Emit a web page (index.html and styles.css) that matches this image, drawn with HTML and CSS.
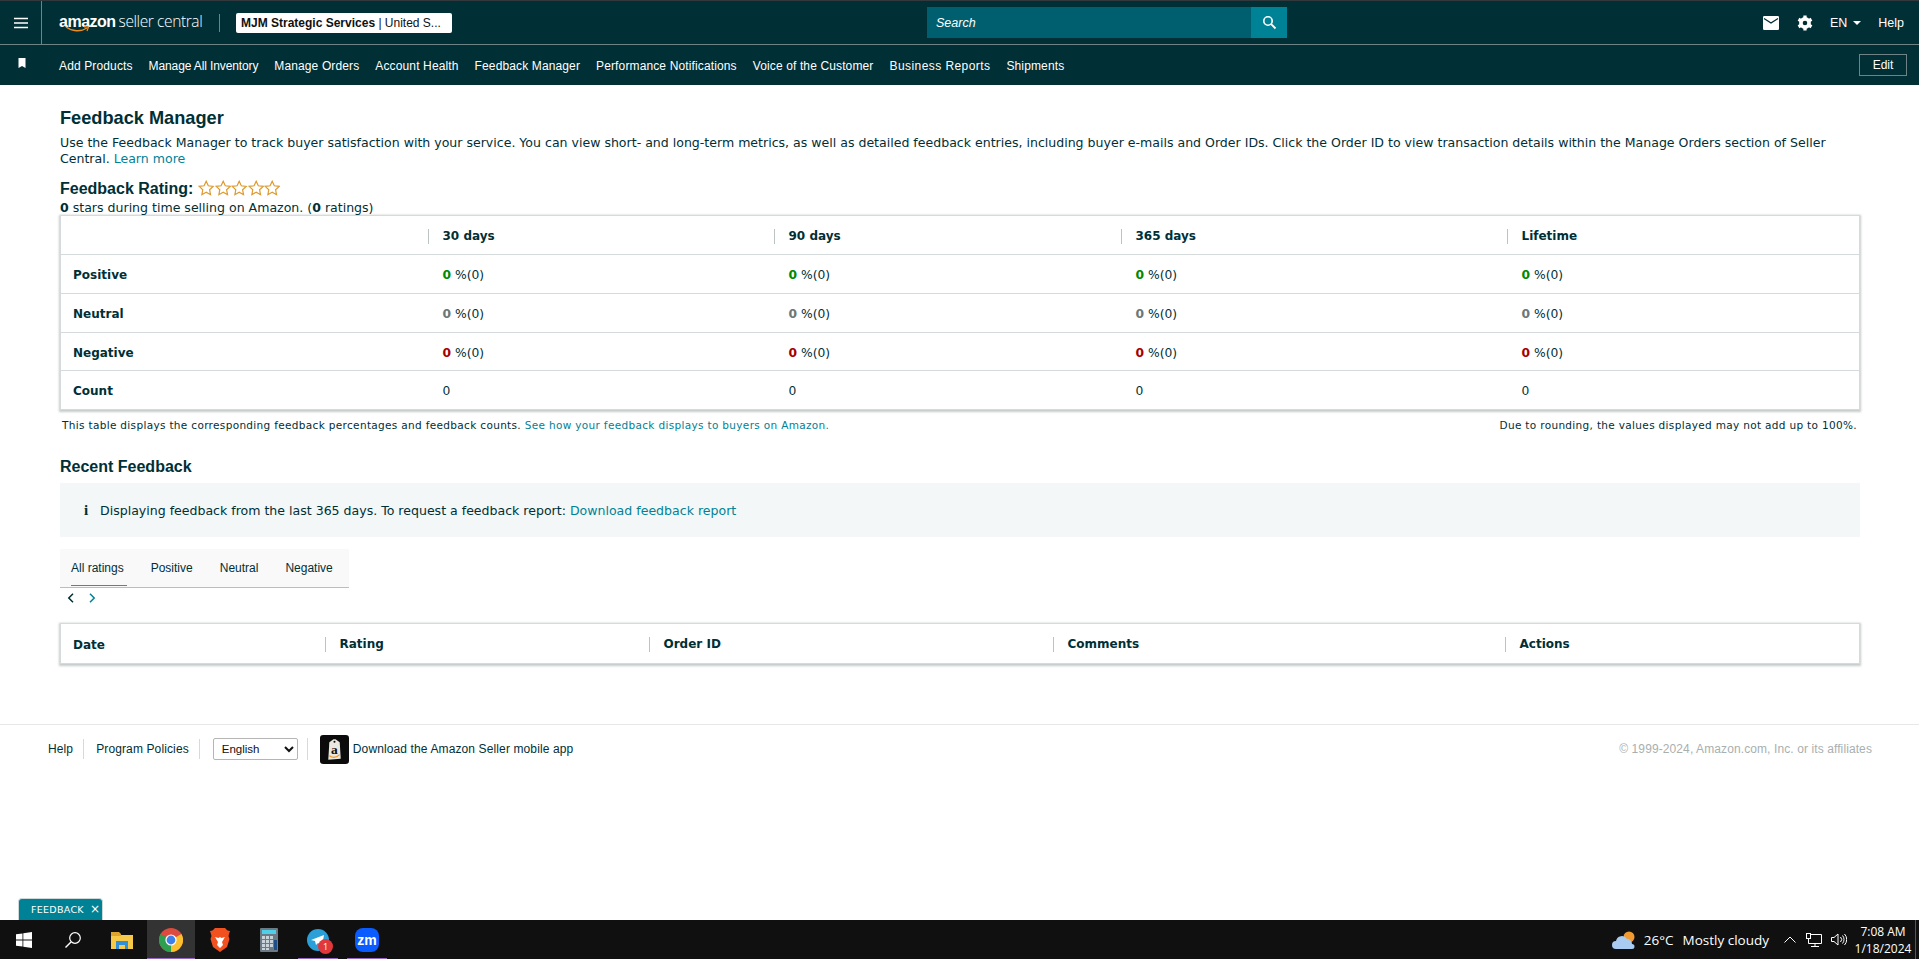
FILE: index.html
```html
<!DOCTYPE html>
<html lang="en">
<head>
<meta charset="utf-8">
<title>Feedback Manager</title>
<link rel="stylesheet" href="styles.css">
</head>
<body>
<header class="header">
  <div class="topbar">
    <div class="burger"><svg width="14" height="12" viewBox="0 0 14 12"><path d="M0 1.500h14M0 6h14M0 10.500h14" stroke="#fff" stroke-width="1.700"/></svg></div>
    <div class="logo">
      <span class="logo-a">amazon</span><span class="logo-b">seller central</span>
      <svg class="smile" width="26" height="7" viewBox="0 0 26 7"><path d="M1 1c6 4.500 15 5 21 1" fill="none" stroke="#f08c1e" stroke-width="1.400"/><path d="M19 .8l4.500 .2-1.500 4" fill="none" stroke="#f08c1e" stroke-width="1.200"/></svg>
    </div>
    <div class="logo-sep"></div>
    <div class="account"><b>MJM Strategic Services</b> | United S...</div>
    <div class="search">
      <div class="search-input">Search</div>
      <div class="search-btn"><svg width="15" height="15" viewBox="0 0 15 15"><circle cx="6" cy="6" r="4.200" fill="none" stroke="#fff" stroke-width="1.600"/><path d="M9.200 9.200l4.300 4.300" stroke="#fff" stroke-width="1.800"/></svg></div>
    </div>
    <div class="top-right">
      <svg width="16" height="14" viewBox="0 0 16 14"><rect width="16" height="14" rx="1.200" fill="#fff"/><path d="M1 2.500l7 4.500 7-4.500" fill="none" stroke="#002f36" stroke-width="1.400"/></svg>
      <svg class="gear" width="16" height="16" viewBox="0 0 16 16"><circle cx="8" cy="8" r="4.100" fill="none" stroke="#fff" stroke-width="3.600"/><path d="M8 .5v3M8 12.500v3M1.500 4.250l2.600 1.500M11.900 10.250l2.600 1.500M1.500 11.750l2.600-1.500M11.900 5.750l2.600-1.500" stroke="#fff" stroke-width="3.300"/></svg>
      <span class="lang">EN<i class="caret"></i></span>
      <span class="help-top">Help</span>
    </div>
  </div>
  <nav class="navbar">
    <svg class="bookmark" width="8" height="10" viewBox="0 0 8 10"><path d="M.5 0h7v10L4 8 .5 10z" fill="#fff"/></svg>
    <a>Add Products</a><a class="nav-tight">Manage All Inventory</a><a>Manage Orders</a><a>Account Health</a><a>Feedback Manager</a><a>Performance Notifications</a><a>Voice of the Customer</a><a class="nav-wide">Business Reports</a><a>Shipments</a>
    <button class="edit">Edit</button>
  </nav>
</header>

<main class="main">
  <h1 class="title">Feedback Manager</h1>
  <p class="intro">Use the Feedback Manager to track buyer satisfaction with your service. You can view short- and long-term metrics, as well as detailed feedback entries, including buyer e-mails and Order IDs. Click the Order ID to view transaction details within the Manage Orders section of Seller Central. <a class="link">Learn more</a></p>
  <div class="rating-head">
    <span class="rating-title">Feedback Rating:</span>
    <span class="stars">
      <svg viewBox="0 0 14 14"><path class="star" d="M7 1l1.800 3.900 4.200.5-3.100 2.900.8 4.200L7 10.400l-3.700 2.100.8-4.200L1 5.400l4.200-.5z"/></svg>
      <svg viewBox="0 0 14 14"><path class="star" d="M7 1l1.800 3.900 4.200.5-3.100 2.900.8 4.200L7 10.400l-3.700 2.100.8-4.200L1 5.400l4.200-.5z"/></svg>
      <svg viewBox="0 0 14 14"><path class="star" d="M7 1l1.800 3.900 4.200.5-3.100 2.900.8 4.200L7 10.400l-3.700 2.100.8-4.200L1 5.400l4.200-.5z"/></svg>
      <svg viewBox="0 0 14 14"><path class="star" d="M7 1l1.800 3.900 4.200.5-3.100 2.900.8 4.200L7 10.400l-3.700 2.100.8-4.200L1 5.400l4.200-.5z"/></svg>
      <svg viewBox="0 0 14 14"><path class="star" d="M7 1l1.800 3.900 4.200.5-3.100 2.900.8 4.200L7 10.400l-3.700 2.100.8-4.200L1 5.400l4.200-.5z"/></svg>
    </span>
  </div>
  <p class="rating-sub"><b>0</b> stars during time selling on Amazon. (<b>0</b> ratings)</p>

  <table class="card stats">
    <colgroup><col class="c1"><col class="c2"><col class="c3"><col class="c4"><col></colgroup>
    <thead><tr><th></th><th><span class="th-in">30 days</span></th><th><span class="th-in">90 days</span></th><th><span class="th-in">365 days</span></th><th><span class="th-in">Lifetime</span></th></tr></thead>
    <tbody>
      <tr><th>Positive</th><td><b class="g">0</b> %(0)</td><td><b class="g">0</b> %(0)</td><td><b class="g">0</b> %(0)</td><td><b class="g">0</b> %(0)</td></tr>
      <tr><th>Neutral</th><td><b class="n">0</b> %(0)</td><td><b class="n">0</b> %(0)</td><td><b class="n">0</b> %(0)</td><td><b class="n">0</b> %(0)</td></tr>
      <tr class="short"><th>Negative</th><td><b class="r">0</b> %(0)</td><td><b class="r">0</b> %(0)</td><td><b class="r">0</b> %(0)</td><td><b class="r">0</b> %(0)</td></tr>
      <tr><th>Count</th><td>0</td><td>0</td><td>0</td><td>0</td></tr>
    </tbody>
  </table>
  <div class="notes">
    <span>This table displays the corresponding feedback percentages and feedback counts. <a class="link">See how your feedback displays to buyers on Amazon.</a></span>
    <span>Due to rounding, the values displayed may not add up to 100%.</span>
  </div>

  <h2 class="recent">Recent Feedback</h2>
  <div class="info"><span class="info-i">i</span><span>Displaying feedback from the last 365 days. To request a feedback report: <a class="link">Download feedback report</a></span></div>

  <div class="tabs">
    <span class="tab active">All ratings</span><span class="tab">Positive</span><span class="tab">Neutral</span><span class="tab">Negative</span>
  </div>
  <div class="pager">
    <svg width="8" height="10" viewBox="0 0 8 10"><path d="M6 .8L1.800 5 6 9.200" fill="none" stroke="#002f36" stroke-width="1.500"/></svg>
    <svg width="8" height="10" viewBox="0 0 8 10"><path d="M2 .8L6.200 5 2 9.200" fill="none" stroke="#008296" stroke-width="1.500"/></svg>
  </div>

  <table class="card recent-table">
    <colgroup><col class="r1"><col class="r2"><col class="r3"><col class="r4"><col></colgroup>
    <thead><tr><th>Date</th><th><span class="th-in">Rating</span></th><th><span class="th-in">Order ID</span></th><th><span class="th-in">Comments</span></th><th><span class="th-in">Actions</span></th></tr></thead>
  </table>
</main>

<footer class="footer">
  <a class="f-link">Help</a>
  <a class="f-link">Program Policies</a>
  <div class="f-lang"><select class="f-select"><option>English</option></select></div>
  <svg class="app-icon" width="29" height="29" viewBox="0 0 28 28"><rect width="28" height="28" rx="3" fill="#0b0b0b"/><path d="M9 7l4-3h2l4 3 1 16-12 1z" fill="#e9e7df"/><circle cx="14" cy="6.500" r="1" fill="#0b0b0b"/><text class="app-a" x="14" y="18" text-anchor="middle">a</text><path d="M9 20c3 2 7 2 10-1" fill="none" stroke="#f09a20" stroke-width="1.200"/></svg>
  <a class="f-app">Download the Amazon Seller mobile app</a>
  <span class="copyright">© 1999-2024, Amazon.com, Inc. or its affiliates</span>
</footer>

<div class="feedback-tab">FEEDBACK<span class="fb-x">×</span></div>

<div class="taskbar">
  <div class="tb-item"><svg width="16" height="16" viewBox="0 0 16 16"><path d="M0 2.300l6.500-.9v6.200H0zM7.300 1.300L16 0v7.600H7.300zM0 8.400h6.500v6.200L0 13.700zM7.300 8.400H16V16l-8.700-1.300z" fill="#fff"/></svg></div>
  <div class="tb-item"><svg width="18" height="18" viewBox="0 0 18 18"><circle cx="11" cy="7" r="5.300" fill="none" stroke="#fff" stroke-width="1.200"/><path d="M7 11l-5.500 5.500" stroke="#fff" stroke-width="1.500"/></svg></div>
  <div class="tb-item"><svg width="22" height="18" viewBox="0 0 22 18"><path d="M0 2h8l2 2h12v14H0z" fill="#f7c948"/><path d="M0 1h8l2 2v2H0z" fill="#dba52e"/><path d="M5 10h12v8h-3v-4H8v4H5z" fill="#2f8fd8"/></svg></div>
  <div class="tb-item active"><svg width="24" height="24" viewBox="0 0 24 24"><circle cx="12" cy="12" r="12" fill="#dd4b3e"/><path d="M12 12L22.400 6A12 12 0 0 1 12 24z" fill="#fbc02d"/><path d="M12 12L12 24A12 12 0 0 1 1.600 6z" fill="#2e9e4f"/><circle cx="12" cy="12" r="5.600" fill="#fff"/><circle cx="12" cy="12" r="4.400" fill="#3f7fe8"/></svg></div>
  <div class="tb-item"><svg width="20" height="24" viewBox="0 0 20 24"><path d="M5 0h10l2.500 2.500L20 3l-1 3-.5 2 1 3-2.500 8-7 5-7-5-2.500-8 1-3L1 6 0 3l2.500-.5z" fill="#f1511f"/><path d="M5 9l3.500 1L10 9l1.500 1L15 9l-3 5 1 3-3 3-3-3 1-3z" fill="#fff"/></svg></div>
  <div class="tb-item"><svg width="18" height="24" viewBox="0 0 18 24"><rect width="18" height="24" rx="1" fill="#6c7a86"/><rect x="2" y="2" width="14" height="4" fill="#4fd0e8"/><path d="M2 8h3v3H2zM6 8h3v3H6zM10 8h3v3h-3zM2 12h3v3H2zM6 12h3v3H6zM2 16h3v3H2zM6 16h3v3H6zM2 20h3v2H2zM6 20h3v2H6zM10 12h3v3h-3zM10 16h3v3h-3z" fill="#c9d3da"/><rect x="14" y="12" width="3" height="10" fill="#1d4f86"/></svg></div>
  <div class="tb-item under"><span class="tg"><svg width="22" height="22" viewBox="0 0 22 22"><circle cx="11" cy="11" r="11" fill="#2a9fd8"/><path d="M4 11l13-5-2 11-4-3-2 2-1-4z" fill="#fff"/></svg><span class="tg-badge">1</span></span></div>
  <div class="tb-item under"><svg width="24" height="24" viewBox="0 0 24 24"><rect width="24" height="24" rx="8" fill="#0b5cff"/><text class="zm" x="12" y="16.500" text-anchor="middle">zm</text></svg></div>
  <div class="tray">
    <svg class="cloud" width="24" height="20" viewBox="0 0 24 20"><circle cx="17" cy="7" r="5.500" fill="#f09a30"/><path d="M4 19a4 4 0 0 1 0-8 6 6 0 0 1 11-2 5 5 0 0 1 5 5 2.500 2.500 0 0 1 0 5z" fill="#a9cbf2"/></svg>
    <span class="temp">26°C</span>
    <span class="weather">Mostly cloudy</span>
    <svg class="tray-chev" width="12" height="7" viewBox="0 0 12 7"><path d="M.5 6.500L6 1l5.500 5.500" fill="none" stroke="#fff"/></svg>
    <svg class="tray-net" width="16" height="14" viewBox="0 0 16 14"><path d="M2.500 1.500h13v9h-13zM5 13.500h8M9 10.500v3" fill="none" stroke="#fff"/><rect x=".5" y=".5" width="4" height="5" fill="#101010" stroke="#fff"/></svg>
    <svg class="tray-vol" width="16" height="13" viewBox="0 0 16 13"><path d="M.5 4.500h2.500L7 1v11L3 8.500H.5z" fill="none" stroke="#fff"/><path d="M9.500 4a3.500 3.500 0 0 1 0 5M11.500 2.500a6 6 0 0 1 0 8M13.500 1a8 8 0 0 1 0 11" fill="none" stroke="#fff"/></svg>
    <div class="clock"><span>7:08 AM</span><span>1/18/2024</span></div>
    <div class="show-desktop"></div>
  </div>
</div>
</body>
</html>
```

FILE: styles.css
```css
* { box-sizing: border-box; }
html, body { margin: 0; height: 959px; overflow: hidden; }
body {
  display: flex;
  flex-direction: column;
  position: relative;
  background: #fff;
  color: #002f36;
  font-family: "DejaVu Sans", Verdana, sans-serif;
  font-size: 12.550px;
}
p { margin: 0; }
.link { color: #008296; }

.header { background: #002f36; color: #fff; font-family: "Liberation Sans", Arial, sans-serif; }
.topbar {
  height: 45px;
  display: flex;
  align-items: center;
  border-top: 1px solid #32383c;
  border-bottom: 1px solid #6f8286;
}
.burger {
  width: 42px;
  height: 100%;
  flex: none;
  display: flex;
  align-items: center;
  justify-content: center;
  border-right: 1px solid #6f8286;
}
.logo { position: relative; margin-left: 17px; width: 143px; white-space: nowrap; height: 24px; line-height: 20px; }
.logo-a { font-size: 16px; font-weight: 700; letter-spacing: -.5px; }
.logo-b { font-size: 15.500px; margin-left: 3px; letter-spacing: -.4px; font-family: "Open Sans", sans-serif; font-weight: 300; }
.smile { position: absolute; left: 6px; top: 15px; }
.logo-sep { width: 1px; height: 18px; background: #6f8286; margin-left: 17px; }
.account {
  margin-left: 16px;
  width: 216px;
  height: 20px;
  line-height: 20px;
  padding-left: 5px;
  background: #fff;
  border-radius: 2px;
  color: #111;
  font-size: 12px;
  white-space: nowrap;
}
.search { display: flex; margin-left: 475px; height: 31px; }
.search-input {
  width: 324px;
  background: #005f6f;
  color: #fff;
  font-style: italic;
  font-size: 12.500px;
  line-height: 33px;
  padding-left: 9px;
}
.search-btn { width: 36px; background: #008296; display: flex; align-items: center; justify-content: center; }
.top-right { margin-left: auto; display: flex; align-items: center; padding-right: 15px; font-size: 12.500px; }
.gear { margin-left: 18px; }
.lang { margin-left: 17px; display: flex; align-items: center; }
.caret { margin-left: 6px; width: 0; height: 0; border: 4px solid transparent; border-top: 4px solid #fff; border-bottom: 0; }
.help-top { margin-left: 17px; }

.navbar {
  height: 40px;
  display: flex;
  align-items: center;
  font-size: 12px;
  letter-spacing: .13px;
  padding-left: 18px;
  padding-right: 12px;
  padding-top: 2px;
}
.navbar a { margin-right: 16px; white-space: nowrap; }
.navbar .nav-tight { letter-spacing: -.12px; }
.navbar .nav-wide { letter-spacing: .43px; }
.bookmark { margin-right: 33px; margin-top: -6px; }
.edit {
  margin-left: auto;
  margin-top: -2px;
  width: 48px;
  height: 22px;
  background: transparent;
  color: #fff;
  border: 1px solid #6f8286;
  font: 12px "Liberation Sans", Arial, sans-serif;
  padding: 0;
}

.main { padding: 22px 59px 0 60px; height: 639px; flex: none; }
.title { margin: 0; font: 700 18.200px/22px "Liberation Sans", Arial, sans-serif; }
.intro { line-height: 16px; margin-top: 6px; }
.rating-head { display: flex; align-items: center; margin-top: 12px; height: 20px; }
.rating-title { font: 700 16px "Liberation Sans", Arial, sans-serif; }
.stars { display: flex; margin-left: 5px; margin-top: -2px; }
.stars svg { width: 16.400px; height: 16.400px; flex: none; }
.star { fill: #fff; stroke: #de9a2c; stroke-width: 1; }
.rating-sub { line-height: 14px; margin-top: 2px; }

.card {
  width: 100%;
  table-layout: fixed;
  border-collapse: collapse;
  border: 1px solid #d5dbdb;
  box-shadow: 0 1px 2px 1px rgba(130, 140, 140, .45);
  font-size: 12.300px;
}
.c1 { width: 369px; }
.c2 { width: 346px; }
.c3 { width: 347px; }
.c4 { width: 386px; }
.r1 { width: 266px; }
.r2 { width: 324px; }
.r3 { width: 404px; }
.r4 { width: 452px; }
.card th, .card td {
  text-align: left;
  padding: 2px 0 0 13px;
  height: 39px;
}
.card th { font-weight: 700; font-size: 12px; }
.stats .short th, .stats .short td { height: 38px; }
.stats tbody tr { border-top: 1px solid #d5dbdb; }
.stats tbody th { padding-left: 12px; }
.recent-table th:first-child { padding-left: 12px; }
.th-in { display: block; border-left: 1px solid #bcc3c3; margin-left: -15px; padding-left: 14px; line-height: 15px; }
.recent-table th { height: 40px; }
.g { color: #008a00; }
.n { color: #6c7778; }
.r { color: #a60000; }

.notes {
  display: flex;
  justify-content: space-between;
  margin-top: 9px;
  padding: 0 3px 0 2px;
  font-size: 10.500px;
  letter-spacing: .33px;
  line-height: 13px;
}
.recent { margin: 25px 0 0; font: 700 16px/20px "Liberation Sans", Arial, sans-serif; }
.info {
  display: flex;
  align-items: center;
  margin-top: 6px;
  height: 54px;
  background: #f3f7f7;
  padding-left: 24px;
}
.info-i { width: 16px; font-weight: 900; font-size: 15px; font-family: "Liberation Serif", serif; }
.tabs {
  display: flex;
  margin-top: 12px;
  width: 289px;
  height: 39px;
  padding-left: 11px;
  background: #f9f9f9;
  border-bottom: 1px solid #b9bfbf;
  font: 12px "Liberation Sans", Arial, sans-serif;
}
.tab { flex: none; margin-right: 27px; line-height: 38px; height: 37px; white-space: nowrap; }
.tab:last-child { margin-right: 0; }
.tab.active { border-bottom: 1px solid #00a8b8; padding-right: 3px; margin-right: 24px; }
.pager { display: flex; gap: 13px; padding-left: 7px; margin-top: 5px; height: 30px; }

.footer {
  height: 49px;
  flex: none;
  display: flex;
  align-items: center;
  border-top: 1px solid #e7e9e9;
  padding: 0 47px 0 48px;
  font: 12px "Liberation Sans", Arial, sans-serif;
  letter-spacing: .12px;
}
.f-link { padding-right: 10px; margin-right: 12px; border-right: 1px solid #d5dbdb; line-height: 20px; }
.f-link + .f-link { margin-right: 13px; }
.f-lang { padding-right: 9px; margin-right: 12px; border-right: 1px solid #d5dbdb; display: flex; height: 22px; }
.f-select { width: 85px; height: 22px; font: 11.500px "Liberation Sans", Arial, sans-serif; background: #fff; color: #111; border: 1px solid #b5b5b5; border-radius: 2px; padding-left: 4px; }
.app-icon { flex: none; }
.app-a { font: 700 13px "Liberation Serif", serif; fill: #111; }
.f-app { margin-left: 4px; }
.copyright { margin-left: auto; color: #a9afaf; letter-spacing: .1px; }

.feedback-tab {
  position: absolute;
  left: 18px;
  top: 898px;
  width: 85px;
  height: 22px;
  padding-left: 12px;
  background: #008296;
  border: 1px solid #cfd8d8;
  border-bottom: 0;
  border-radius: 4px 4px 0 0;
  color: #fff;
  font: 9.500px/20px "DejaVu Sans", sans-serif;
  letter-spacing: .3px;
}
.fb-x { margin-left: 6px; font-size: 12px; }

.taskbar {
  height: 39px;
  margin-top: auto;
  flex: none;
  background: #101010;
  display: flex;
  align-items: center;
  gap: 1px;
  color: #fff;
  font-family: "Open Sans", "Noto Sans", sans-serif;
}
.tb-item { position: relative; width: 48px; height: 39px; flex: none; display: flex; align-items: center; justify-content: center; }
.tb-item.active { background: #333; }
.tb-item.active::after, .tb-item.under::after {
  content: "";
  position: absolute;
  bottom: 0;
  left: 0;
  right: 0;
  height: 1.500px;
  background: #9467c2;
}
.tb-item.under::after { left: 4px; right: 4px; }
.tg { position: relative; display: flex; }
.tg-badge {
  position: absolute;
  right: -4px;
  bottom: -3px;
  width: 15px;
  height: 15px;
  border-radius: 50%;
  background: #e0383c;
  color: #fff;
  font-size: 9px;
  line-height: 15px;
  text-align: center;
}
.zm { font: 700 14px "Liberation Sans", Arial, sans-serif; fill: #fff; }
.tray { margin-left: auto; display: flex; align-items: center; font-size: 13.500px; }
.temp { margin-left: 8px; }
.weather { margin-left: 9px; }
.tray-chev { margin-left: 15px; }
.tray-net { margin-left: 10px; }
.tray-vol { margin-left: 9px; }
.clock { margin-left: 9px; width: 54px; display: flex; flex-direction: column; align-items: center; font-size: 12px; line-height: 17px; }
.show-desktop { width: 1px; height: 39px; background: #555; margin: 0 3px 0 5px; }
```
